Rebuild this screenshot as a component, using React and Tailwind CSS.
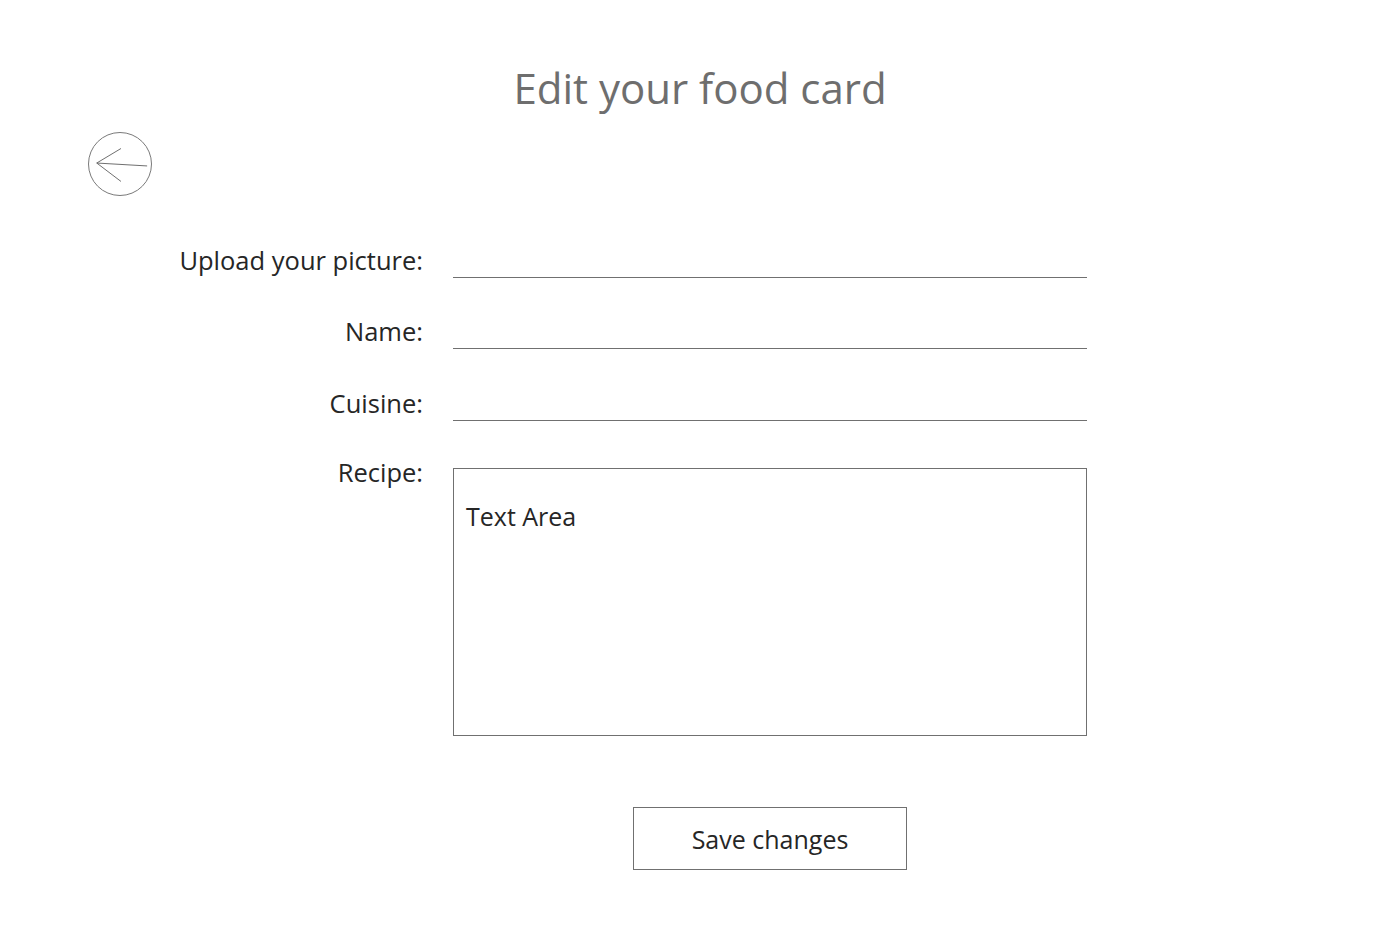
import { useState } from 'react';

const Field = ({ label, value, onChange }) => (
  <div className="flex items-end h-[40px]">
    <label className="w-[423px] pb-[2px] text-right text-[25.5px] leading-[32px] text-[#262626]">{label}</label>
    <input
      value={value}
      onChange={onChange}
      className="ml-[30px] w-[634px] h-[40px] border-b border-[#707070] outline-none text-[22px] text-[#262626] bg-transparent"
    />
  </div>
);

const App = () => {
  const [form, setForm] = useState({ picture: '', name: '', cuisine: '' });

  return (
    <div className="min-h-screen bg-white font-['Open_Sans',sans-serif]">
      <h1 className="pt-[60px] text-center text-[42px] leading-[56px] text-[#6e6e6e]">Edit your food card</h1>

      <button className="mt-[16px] ml-[88px] w-[64px] h-[64px] rounded-full border border-[#7a7a7a] flex items-center justify-center">
        <svg width="64" height="64" viewBox="0 0 64 64" fill="none" stroke="#6a6a6a" strokeWidth="1">
          <path d="M8 31 L60 34" />
          <path d="M8 31 L33 16" />
          <path d="M8 31 L33 50" />
        </svg>
      </button>

      <div className="mt-[42px] flex flex-col">
        <Field label="Upload your picture:" value={form.picture} onChange={(e) => setForm({ ...form, picture: e.target.value })} />
        <div className="mt-[31px]">
          <Field label="Name:" value={form.name} onChange={(e) => setForm({ ...form, name: e.target.value })} />
        </div>
        <div className="mt-[32px]">
          <Field label="Cuisine:" value={form.cuisine} onChange={(e) => setForm({ ...form, cuisine: e.target.value })} />
        </div>

        <div className="mt-[35px] flex items-start">
          <label className="w-[423px] text-right text-[25.5px] leading-[32px] text-[#262626]">Recipe:</label>
          <div className="ml-[30px] mt-[12px] w-[634px] h-[268px] border border-[#707070] pl-[12px] pt-[31px] text-[25px] leading-[32px] text-[#262626]">
            Text Area
          </div>
        </div>

        <div className="ml-[453px] w-[634px] flex justify-center mt-[71px]">
          <button className="w-[274px] h-[63px] border border-[#707070] text-[25px] leading-[32px] text-[#262626]">
            Save changes
          </button>
        </div>
      </div>
    </div>
  );
};

export default App;
